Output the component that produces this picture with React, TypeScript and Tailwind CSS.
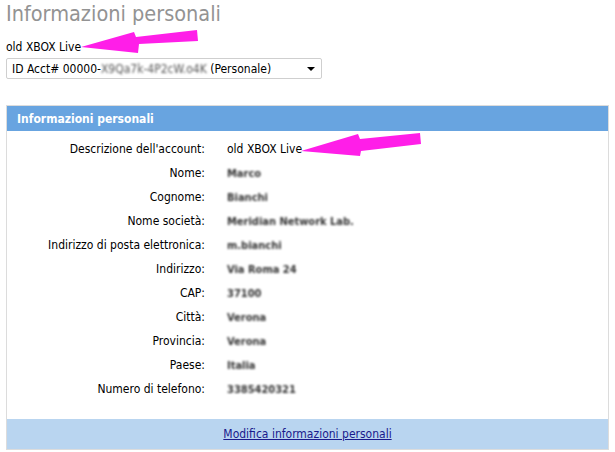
import React from "react";

const rows: { label: string; value: string; blur?: boolean }[] = [
  { label: "Descrizione dell'account:", value: "old XBOX Live" },
  { label: "Nome:", value: "Marco", blur: true },
  { label: "Cognome:", value: "Bianchi", blur: true },
  { label: "Nome società:", value: "Meridian Network Lab.", blur: true },
  { label: "Indirizzo di posta elettronica:", value: "m.bianchi", blur: true },
  { label: "Indirizzo:", value: "Via Roma 24", blur: true },
  { label: "CAP:", value: "37100", blur: true },
  { label: "Città:", value: "Verona", blur: true },
  { label: "Provincia:", value: "Verona", blur: true },
  { label: "Paese:", value: "Italia", blur: true },
  { label: "Numero di telefono:", value: "3385420321", blur: true },
];

function Arrow({ points, className }: { points: string; className: string }) {
  return (
    <svg className={className} width="615" height="452" viewBox="0 0 615 452">
      <polygon points={points} fill="#ff1ee8" />
    </svg>
  );
}

export default function App() {
  return (
    <div
      className="relative h-[452px] w-[615px] overflow-hidden bg-white text-[12px] text-black"
      style={{ fontFamily: '"DejaVu Sans Condensed", "Liberation Sans", sans-serif' }}
    >
      <div className="px-[6px]">
        <h1 className="pt-[1px] text-[21.5px] leading-[26px] text-[#939393]">Informazioni personali</h1>
        <p className="mt-[13px] leading-[14px]">old XBOX Live</p>
        <div className="mt-[4px] flex h-[21px] w-[316px] items-center justify-between rounded-[2px] border border-[#cfcfcf] pl-[5px] pr-[6px]">
          <span className="flex items-center">
            ID Acct# 00000-
            <span className="inline-block text-[#555] blur-[1px]">X9Qa7k-4P2cW.o4K</span>
            &nbsp;(Personale)
          </span>
          <span className="h-0 w-0 border-x-[4px] border-t-[4px] border-x-transparent border-t-black" />
        </div>

        <div className="mt-[26px] border border-[#dcdcdc]">
          <div className="flex h-[25px] items-center bg-[#68a4e0] pl-[10px] text-[12px] font-bold text-white">
            Informazioni personali
          </div>
          <div className="pb-[18px] pt-[6px]">
            {rows.map((r) => (
              <div key={r.label} className="grid h-[24px] grid-cols-[198px_1fr] items-center gap-[22px]">
                <span className="text-right">{r.label}</span>
                <span>
                  <span
                    className={
                      r.blur ? "inline-block text-[11px] font-bold text-[#333] blur-[1px]" : "inline-block"
                    }
                  >
                    {r.value}
                  </span>
                </span>
              </div>
            ))}
          </div>
          <div className="flex h-[30px] items-center justify-center bg-[#b9d5f0]">
            <a href="#" className="text-[#1a1a8c] underline">
              Modifica informazioni personali
            </a>
          </div>
        </div>
      </div>

      <Arrow
        className="pointer-events-none absolute left-0 top-0"
        points="81,47 134,32 136,37 197,30 198,41 139,44 138,53"
      />
      <Arrow
        className="pointer-events-none absolute left-0 top-0"
        points="301,151 358,134 360,139 420,133 421,144 361,151 360,156"
      />
    </div>
  );
}
